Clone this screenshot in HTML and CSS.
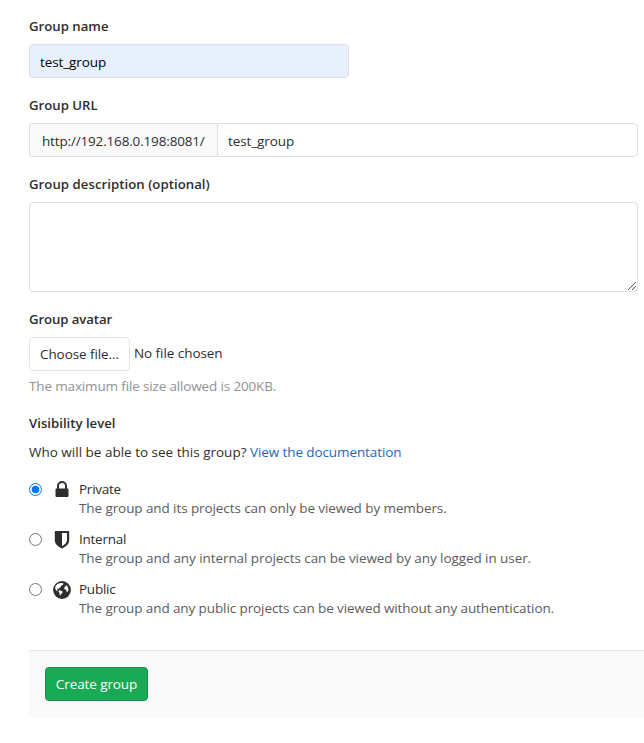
FILE: index.html
```html
<!DOCTYPE html>
<html lang="en">
<head>
<meta charset="utf-8">
<title>New group</title>
<link rel="stylesheet" href="styles.css">
</head>
<body>
<form class="group-form">
  <label class="label" for="name"><span>Group name</span></label>
  <input class="control name" id="name" value="test_group">
  <label class="label" for="url"><span>Group URL</span></label>
  <div class="input-group">
    <span class="prefix"><span>http://192.168.0.198:8081/</span></span>
    <input class="control path" id="url" value="test_group">
  </div>
  <label class="label wide" for="description"><span>Group description (optional)</span></label>
  <div class="description">
    <textarea class="control area" id="description"></textarea>
    <svg class="grip" width="10" height="10" viewBox="0 0 10 10"><path d="M1 9 9 1M5 9l4-4" stroke="#555" fill="none"/></svg>
  </div>
  <div class="label avatar-label"><span>Group avatar</span></div>
  <div class="file-row"><button class="file-button" type="button">Choose file...</button><span class="file-name">No file chosen</span></div>
  <p class="hint"><span>The maximum file size allowed is 200KB.</span></p>
  <div class="label visibility-label"><span>Visibility level</span></div>
  <p class="question"><span>Who will be able to see this group?</span> <a href="#">View the documentation</a></p>
  <div class="option">
    <span class="radio checked"></span>
    <svg class="icon" width="18" height="18" viewBox="0 0 18 18"><path fill="#2e2e2e" fill-rule="evenodd" d="M4 7.500V5a5 5 0 0 1 10 0v2.500h.2c.8 0 1.300.5 1.300 1.300v5.900c0 .8-.5 1.300-1.300 1.300H3.800c-.8 0-1.300-.5-1.300-1.300V8.800c0-.8.5-1.300 1.300-1.300H4Zm2 0h6V5a3 3 0 0 0-6 0v2.500Z"/></svg>
    <div><div class="title">Private</div><div class="text members"><span>The group and its projects can only be viewed by members.</span></div></div>
  </div>
  <div class="option">
    <span class="radio"></span>
    <svg class="icon" width="18" height="18" viewBox="0 0 18 18"><path fill="#2e2e2e" fill-rule="evenodd" d="M2.500 0h13c.4 0 .7.3.7.7v8.500c0 4.200-4.400 7-7.200 8.300-2.800-1.300-7.200-4.100-7.200-8.300V.7c0-.4.3-.7.700-.7ZM9 2v13.200c2.400-1.400 5-3.300 5-5.900V2H9Z"/></svg>
    <div><div class="title">Internal</div><div class="text internal"><span>The group and any internal projects can be viewed by any logged in user.</span></div></div>
  </div>
  <div class="option">
    <span class="radio"></span>
    <svg class="icon globe" width="18" height="18" viewBox="0 0 18 18"><circle cx="9" cy="9" r="8.900" fill="#2e2e2e"/><path fill="#fff" d="M6.500 2.200 9 1.900l1.500.7-.7 1.400-1.500.6-.8 1.600-1.500.7.1 1.200-1.500-.3-.7.800.8 1-.4.6-1.400-1.200-.8-1.800.5-2.200 1.800-2 2.100-.8ZM6.300 9.300l1.700.5 1.700 1-.5 1.500-1.300.8-.3 1.700-1-1.300-.2-1.800-1-1.200.9-1.200ZM13.300 4.200l1.300 1.300.8 2.200-.1 2-1 1.400-.9-.8-.3-1.500-1.600-.5-.5-1.300.9-1.200 1.400-1.600Z"/></svg>
    <div><div class="title">Public</div><div class="text public"><span>The group and any public projects can be viewed without any authentication.</span></div></div>
  </div>
  <div class="actions"><button class="submit" type="button">Create group</button></div>
</form>
</body>
</html>
```
FILE: styles.css
```css
* { box-sizing: border-box; }
body { margin: 0; background: #fff; overflow: hidden; color: #2e2e2e; }
body, input, button, textarea { font-family: "Open Sans", "Noto Sans", sans-serif; font-size: 13.5px; line-height: 20px; }
.group-form { padding: 16px 0 0 29px; }
.label { display: block; height: 20px; margin-bottom: 8px; font-size: 13.2px; font-weight: 600; }
.wide { letter-spacing: .04px; }
.avatar-label { letter-spacing: -.1px; }
.control { display: block; height: 34px; margin: 0; padding: 7px 10px 5px; border: 1px solid #dfdfdf; border-radius: 4px; background: #fff; color: #2e2e2e; outline: 0; letter-spacing: -.1px; }
.name { width: 320px; margin-bottom: 17px; background: #e8f0fe; color: #000; }
.input-group { display: flex; width: 609px; margin-bottom: 17px; }
.prefix { width: 188px; height: 34px; padding: 7px 0 5px 12px; border: 1px solid #dfdfdf; border-right: 0; border-radius: 4px 0 0 4px; background: #fafafa; white-space: nowrap; letter-spacing: -.16px; }
.path { flex: 1; border-radius: 0 4px 4px 0; }
.description { position: relative; width: 609px; margin-bottom: 17px; }
.area { width: 100%; height: 90px; resize: none; }
.grip { position: absolute; right: 1px; bottom: 1px; }
.file-row { display: flex; height: 34px; }
.file-button { width: 101px; height: 34px; padding: 0; border: 1px solid #e5e5e5; border-radius: 4px; background: #fff; color: #2e2e2e; white-space: nowrap; letter-spacing: -.08px; }
.file-name { margin: 6px 0 0 4px; letter-spacing: -.06px; }
.hint { margin: 5px 0 17px; color: #919191; letter-spacing: -.15px; }
.visibility-label { margin-bottom: 9px; }
.question { margin: 0 0 17px; white-space: nowrap; }
.question a { color: #1b69b6; text-decoration: none; letter-spacing: -.1px; }
.option { display: flex; height: 40px; margin-bottom: 10px; white-space: nowrap; }
.radio { width: 13px; height: 13px; margin-top: 4px; border: 1px solid #767676; border-radius: 50%; background: #fff; }
.checked { border-color: #0075ff; background: radial-gradient(circle, #0075ff 3.5px, #fff 4.2px); }
.icon { margin: 2px 8px 0 11px; }
.title { height: 19px; letter-spacing: -.25px; }
.text { color: #5c5c5c; }
.members { letter-spacing: -.09px; }
.internal { letter-spacing: -.07px; }
.public { letter-spacing: -.1px; }
.actions { height: 67px; margin-top: 31px; padding: 16px; border-top: 1px solid #e5e5e5; background: #fafafa; }
.submit { display: block; width: 103px; height: 34px; padding: 0; border: 1px solid #168f48; border-radius: 4px; background: #1aaa55; color: #fff; white-space: nowrap; letter-spacing: -.1px; }
```
